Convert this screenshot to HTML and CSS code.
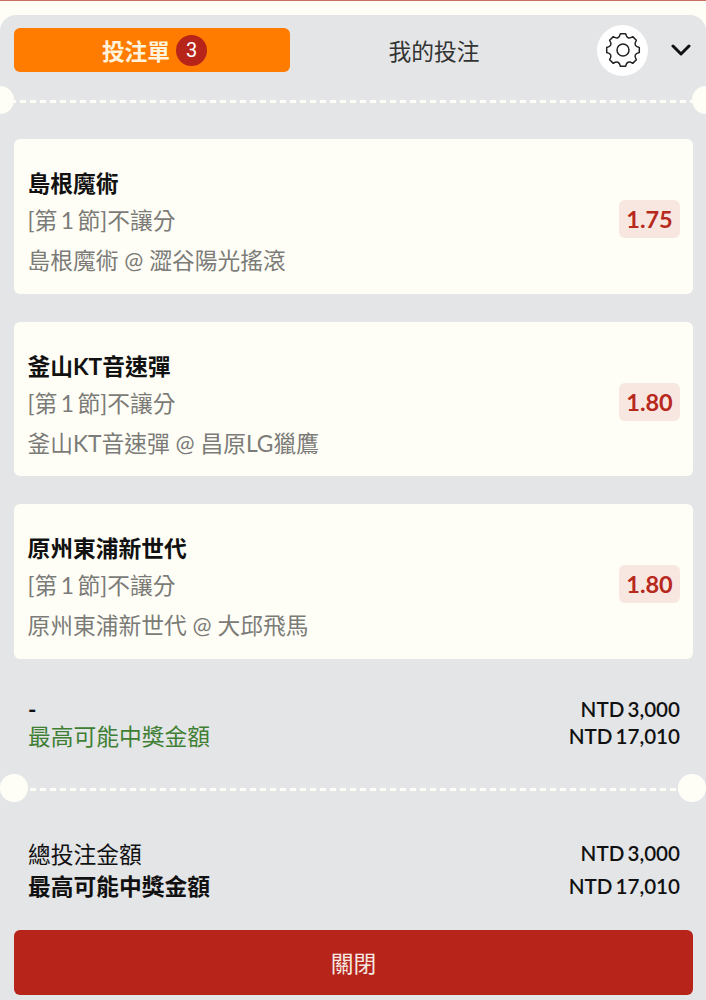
FILE: index.html
```html
<!DOCTYPE html>
<html lang="zh-Hant">
<head>
    <meta charset="UTF-8">
    <meta name="viewport" content="width=device-width, initial-scale=1.0">
    <title>投注單</title>
    <link rel="stylesheet" href="styles.css">
</head>
<body>
    <div class="panel">
        <div class="tabs">
            <div class="tab-active">
                <span>投注單</span>
                <span class="count">3</span>
            </div>
            <div class="tab-other">我的投注</div>
            <div class="gear">
                <svg width="36" height="36" viewBox="0 0 24 24" fill="none" stroke="#222" stroke-width="1" stroke-linejoin="round">
                    <path d="M10.28 1.14L13.72 1.14Q14.68 5.53 18.47 3.1L20.9 5.53Q18.47 9.32 22.86 10.28L22.86 13.72Q18.47 14.68 20.9 18.47L18.47 20.9Q14.68 18.47 13.72 22.86L10.28 22.86Q9.32 18.47 5.53 20.9L3.1 18.47Q5.53 14.68 1.14 13.72L1.14 10.28Q5.53 9.32 3.1 5.53L5.53 3.1Q9.32 5.53 10.28 1.14Z"/>
                    <circle cx="12" cy="12" r="4"/>
                </svg>
            </div>
            <svg class="arrow" width="20" height="12" viewBox="0 0 20 12" fill="none" stroke="#111" stroke-width="3" stroke-linecap="round" stroke-linejoin="round">
                <path d="M2 2l8 8 8-8"/>
            </svg>
        </div>

        <div class="divider divider-top"></div>

        <div class="cards">
            <div class="card">
                <div class="card-info">
                    <div class="team">島根魔術</div>
                    <div class="market">[第<span class="num">1</span>節]不讓分</div>
                    <div class="match">島根魔術 @ 澀谷陽光搖滾</div>
                </div>
                <div class="odds">1.75</div>
            </div>
            <div class="card">
                <div class="card-info">
                    <div class="team">釜山KT音速彈</div>
                    <div class="market">[第<span class="num">1</span>節]不讓分</div>
                    <div class="match">釜山KT音速彈 @ 昌原LG獵鷹</div>
                </div>
                <div class="odds">1.80</div>
            </div>
            <div class="card">
                <div class="card-info">
                    <div class="team">原州東浦新世代</div>
                    <div class="market">[第<span class="num">1</span>節]不讓分</div>
                    <div class="match">原州東浦新世代 @ 大邱飛馬</div>
                </div>
                <div class="odds">1.80</div>
            </div>
        </div>

        <div class="summary">
            <div class="row row-tight">
                <span class="bold">-</span>
                <span class="amount">NTD 3,000</span>
            </div>
            <div class="row row-tight">
                <span class="green">最高可能中獎金額</span>
                <span class="amount">NTD 17,010</span>
            </div>
        </div>

        <div class="divider divider-bottom"></div>

        <div class="totals">
            <div class="row">
                <span>總投注金額</span>
                <span class="amount">NTD 3,000</span>
            </div>
            <div class="row">
                <span class="bold">最高可能中獎金額</span>
                <span class="amount">NTD 17,010</span>
            </div>
        </div>

        <div class="close-btn">關閉</div>
    </div>
</body>
</html>
```
FILE: styles.css
```css
*{
    margin: 0;
    padding: 0;
    box-sizing: border-box;
}
html,
body{
    height: 1000px;
    overflow: hidden;
}
body{
    padding-top: 14px;
    background-color: #fffef6;
    border-top: 1px solid #c9705f;
    font-family: "Lato", "Noto Sans CJK TC", sans-serif;
    font-size: 22.75px;
    color: #111;
}
.panel{
    height: 990px;
    padding: 13px 13px 0 14px;
    background-color: #e3e5e7;
    border-radius: 16px 16px 0 0;
    overflow: hidden;
}
.tabs{
    display: flex;
    align-items: center;
    height: 44px;
}
.tab-active{
    display: flex;
    align-items: center;
    justify-content: center;
    gap: 6px;
    width: 276px;
    height: 44px;
    padding-left: 5px;
    background-color: #ff7c00;
    border-radius: 6px;
    color: #fff3dc;
    font-weight: 700;
}
.count{
    display: flex;
    align-items: center;
    justify-content: center;
    width: 31px;
    height: 31px;
    background-color: #b7241a;
    border-radius: 50%;
    color: #fff;
    font-family: "Roboto", sans-serif;
    font-size: 20px;
    font-weight: 400;
}
.tab-other{
    width: 288px;
    text-align: center;
    color: #333;
}
.gear{
    display: flex;
    align-items: center;
    justify-content: center;
    width: 51px;
    height: 51px;
    margin-left: 19px;
    background-color: #fff;
    border-radius: 50%;
}
.arrow{
    margin-left: 23px;
}
.divider{
    position: relative;
    margin: 0 -13px 0 -14px;
    height: 3px;
    background: repeating-linear-gradient(90deg, #fffef6 0 6px, transparent 6px 10px);
}
.divider::before,
.divider::after{
    content: "";
    position: absolute;
    top: -14px;
    width: 28px;
    height: 28px;
    background-color: #fffef6;
    border-radius: 50%;
}
.divider::before{
    left: -14px;
}
.divider::after{
    right: -14px;
}
.divider-top{
    margin-top: 28px;
}
.divider-bottom{
    margin-top: 38px;
}
.divider-bottom::before{
    left: 0;
}
.divider-bottom::after{
    right: 0;
}
.cards{
    display: flex;
    flex-direction: column;
    gap: 28px;
    margin-top: 36px;
}
.card{
    display: flex;
    align-items: center;
    justify-content: space-between;
    height: 154.5px;
    padding: 0 13px 0 13.5px;
    background-color: #fffef6;
    border-radius: 6px;
}
.card-info{
    padding-top: 12px;
}
.team{
    font-weight: 700;
    line-height: 37px;
}
.market,
.match{
    color: #7b7b78;
}
.market{
    line-height: 37px;
}
.num{
    margin: 0 3.5px;
}
.match{
    margin-top: 3px;
    line-height: 37px;
}
.odds{
    display: flex;
    align-items: center;
    justify-content: center;
    width: 61px;
    height: 38px;
    margin-top: 6px;
    background-color: #f8e7e0;
    border-radius: 6px;
    color: #b7281d;
    font-size: 23.5px;
    font-weight: 700;
}
.row{
    display: flex;
    align-items: center;
    justify-content: space-between;
    padding: 0 13px 0 14px;
    line-height: 32.5px;
}
.row-tight{
    line-height: 27px;
}
.amount{
    font-size: 20.6px;
    line-height: 25px;
    font-weight: 600;
    word-spacing: -2px;
}
.totals .amount{
    margin-bottom: 2px;
}
.summary{
    margin-top: 37px;
}
.totals{
    margin-top: 48px;
}
.green{
    color: #3f7f34;
}
.bold{
    font-weight: 700;
}
.close-btn{
    display: flex;
    align-items: center;
    justify-content: center;
    height: 65px;
    margin-top: 26px;
    background-color: #b7241a;
    border-radius: 6px;
    color: #f5e9e2;
}
```
